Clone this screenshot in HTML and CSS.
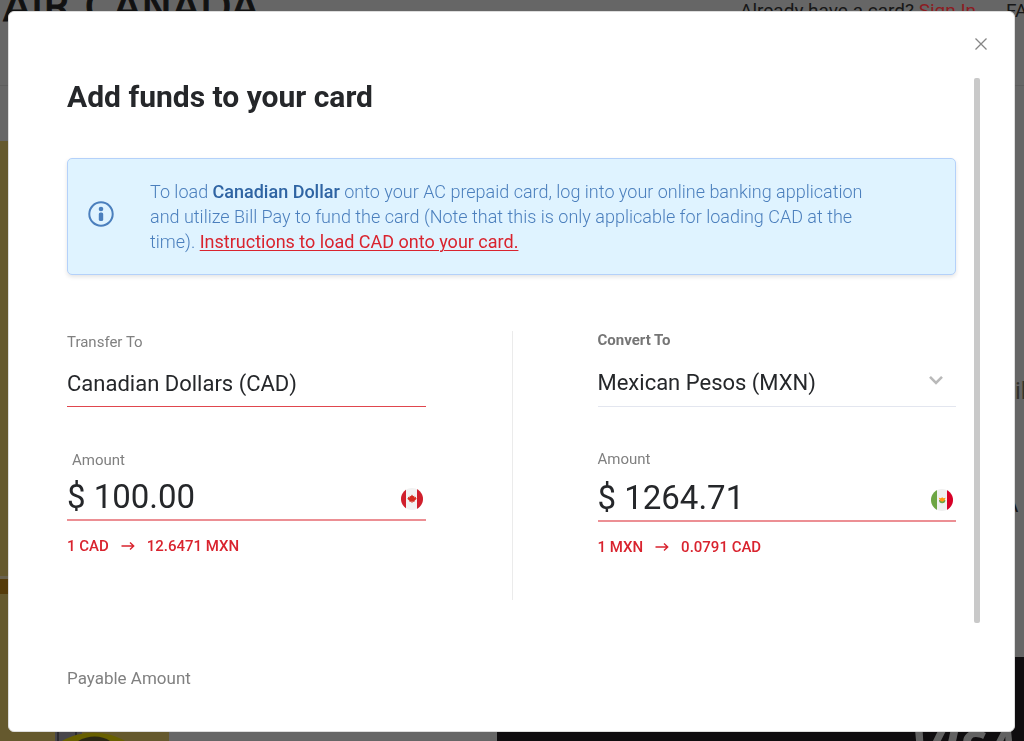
FILE: index.html
```html
<!DOCTYPE html>
<html lang="en">
<head>
<meta charset="utf-8">
<meta name="viewport" content="width=device-width, initial-scale=1">
<title>Add funds to your card</title>
<link rel="stylesheet" href="styles.css">
</head>
<body>
<div class="page">
  <header class="site-header">
    <div class="brand">AIR CANADA</div>
    <div class="site-links"><span>Already have a card? <a href="#signin">Sign In</a></span><a class="faq" href="#faq">FAQ</a></div>
  </header>
  <div class="site-nav"></div>
  <main class="hero">
    <div class="hero-photo">
      <div class="photo-band"></div>
      <svg class="photo-detail" viewBox="0 0 169 12" preserveAspectRatio="none">
        <rect x="55" y="0" width="27" height="12" fill="#48464a"/>
        <path d="M58 0V12M76 0V12" stroke="#2d2b30" stroke-width="2"/>
        <path d="M62 12C80 1 107 1 125 12Z" fill="#686000"/>
        <path d="M78 12C88 6 102 6 110 12Z" fill="#2b2814"/>
      </svg>
    </div>
    <div class="hero-copy">
      <p class="copy-line">il</p>
      <p class="copy-mark">A</p>
      <div class="bank-card">VISA</div>
    </div>
  </main>
</div>

<section class="modal" role="dialog" aria-modal="true" aria-labelledby="title">
  <button class="close" type="button" aria-label="Close">
    <svg width="14" height="14" viewBox="0 0 14 14"><path d="M1.500 1.500L12.500 12.500M12.500 1.500L1.500 12.500" stroke="#858585" stroke-width="1.300" fill="none"/></svg>
  </button>
  <form class="content">
    <h1 id="title">Add funds to your card</h1>
    <div class="notice">
      <svg class="info" width="26" height="26" viewBox="0 0 26 26"><circle cx="13" cy="13" r="11.700" fill="none" stroke="#4b7fbd" stroke-width="2"/><circle cx="13" cy="8" r="2.300" fill="#4b7fbd"/><rect x="10.800" y="11.500" width="4.400" height="8.500" rx="1.600" fill="#4b7fbd"/></svg>
      <p>To load <strong>Canadian Dollar</strong> onto your AC prepaid card, log into your online banking application and utilize Bill Pay to fund the card (Note that this is only applicable for loading CAD at the time). <a href="#instructions">Instructions to load CAD onto your card.</a></p>
    </div>
    <div class="transfer">
      <div class="side side-from">
        <label for="from">Transfer To</label>
        <div class="field"><input class="currency" id="from" type="text" value="Canadian Dollars (CAD)" readonly></div>
        <label class="amount-label" for="from-amount">Amount</label>
        <div class="amount">
          <input id="from-amount" type="text" value="$ 100.00">
          <svg width="24" height="24" viewBox="0 0 24 24" role="img" aria-label="Canada">
            <clipPath id="ca"><circle cx="12" cy="12" r="11"/></clipPath>
            <g clip-path="url(#ca)"><path fill="#f2f2f2" d="M0 0h24v24H0z"/><path fill="#d01f2c" d="M0 0h6v24H0zM17 0h7v24h-7z"/><path fill="#d52b1e" d="M12 7.500l1.100 1.800 1.300-.5-.2 1.800 1.800-.8-.2 1.400 1.100.4-2.600 2.300.3 1-2.200-.3v1.500h-.8v-1.500l-2.200.3.300-1-2.600-2.300 1.100-.4-.2-1.400 1.800.8-.2-1.800 1.300.5z"/></g>
          </svg>
        </div>
        <p class="rate"><span>1 CAD</span><svg width="14" height="10" viewBox="0 0 14 10"><path d="M.5 5H13M9 1.500L12.700 5 9 8.500"/></svg><span>12.6471 MXN</span></p>
      </div>
      <div class="divider"></div>
      <div class="side side-to">
        <label class="strong" for="to">Convert To</label>
        <div class="picker">
          <select class="currency" id="to"><option>Mexican Pesos (MXN)</option></select>
          <svg width="16" height="10" viewBox="0 0 16 10"><path d="M2 1.800L8 7.800 14 1.800" fill="none" stroke="#b9b9b9" stroke-width="2.600"/></svg>
        </div>
        <label class="amount-label" for="to-amount">Amount</label>
        <div class="amount">
          <input id="to-amount" type="text" value="$ 1264.71">
          <svg width="24" height="24" viewBox="0 0 24 24" role="img" aria-label="Mexico">
            <clipPath id="mx"><circle cx="12" cy="12" r="11"/></clipPath>
            <g clip-path="url(#mx)"><path fill="#f0f0f0" d="M0 0h24v24H0z"/><path fill="#6da544" d="M0 0h7v24H0z"/><path fill="#d80027" d="M17 0h7v24h-7z"/><path fill="#6da544" d="M9 12a3.200 3.200 0 0 0 6.400 0z"/><path fill="#ff9811" d="M8.700 9.700l2.200.6 1.300-1.100 1.300 1.100 2.200-.6-1.500 3-2 1-2-1z"/></g>
          </svg>
        </div>
        <p class="rate"><span>1 MXN</span><svg width="14" height="10" viewBox="0 0 14 10"><path d="M.5 5H13M9 1.500L12.700 5 9 8.500"/></svg><span>0.0791 CAD</span></p>
      </div>
    </div>
    <p class="payable">Payable Amount</p>
  </form>
  <div class="scroll-thumb"></div>
</section>
</body>
</html>
```
FILE: styles.css
```css
* { box-sizing: border-box; }
body { margin: 0; font-family: Roboto, "Liberation Sans", sans-serif; color: #25272a; background: #666; }
p, h1 { margin: 0; }
input, select, button { font: inherit; color: inherit; border: 0; padding: 0; margin: 0; background: none; border-radius: 0; outline: 0; }

/* Dimmed page behind the dialog */
.page { height: 100vh; overflow: hidden; display: flex; flex-direction: column; }
.site-header { height: 86px; flex: none; display: flex; justify-content: space-between; padding-left: 3px; border-bottom: 1px solid #5d5d5d; white-space: nowrap; overflow: hidden; }
.brand { font: 41px/40px "DejaVu Sans", sans-serif; color: #111; margin-top: -13px; -webkit-text-stroke: 1px #111; }
.site-links { display: flex; gap: 30px; width: 284px; font-size: 19px; line-height: 21px; color: #171717; }
.site-links a { color: #8c1c22; text-decoration: none; }
.site-links .faq { color: #171717; }
.site-nav { height: 55px; flex: none; }
.hero { flex: 1; display: flex; min-height: 0; }
.hero-photo { width: 169px; background: #65592e; display: flex; flex-direction: column; justify-content: space-between; padding-top: 435px; }
.photo-band { height: 18px; background: #553b0a; border-top: 3px solid #69624f; }
.photo-detail { width: 100%; height: 12px; display: block; }
.hero-copy { flex: 1; display: flex; flex-direction: column; align-items: flex-end; padding-top: 236px; overflow: hidden; }
.copy-line { font-size: 24px; line-height: 28px; width: 9px; color: #34332c; }
.copy-mark { font-size: 22px; line-height: 24px; margin-top: 88px; width: 20px; color: #171717; }
.bank-card { margin-top: 140px; align-self: stretch; flex: 1; margin-left: 328px; background: #0f0d0f; color: #626262; font: italic bold 52px/52px "Open Sans", sans-serif; text-align: right; padding: 65px 6px 0 0; overflow: hidden; }

/* Dialog */
.modal { position: fixed; top: 11px; right: 9px; bottom: 9px; left: 8px; overflow: hidden; background: #fff; border: 1px solid #ddd; border-radius: 6px; display: grid; grid-template-columns: 1fr 6px; column-gap: 18px; padding: 66px 34px 0 58px; }
.close { position: absolute; top: 21px; right: 22px; width: 22px; height: 22px; display: grid; place-items: center; cursor: pointer; }
.scroll-thumb { height: 545px; background: #c9c9c9; border-radius: 2px; }
h1 { font-size: 30px; line-height: 38px; font-weight: 700; }
.notice { margin-top: 42px; display: flex; align-items: center; gap: 36px; padding: 20px 84px 20px 20px; background: #dff3ff; border: 1px solid #b4d1fa; border-radius: 5px; box-shadow: 0 2px 4px #0000001c; color: #4b7fbd; font-size: 18px; line-height: 25px; font-weight: 300; }
.info { flex: none; margin-bottom: 6px; }
.notice strong { font-weight: 500; color: #2f64a3; }
.notice a { color: #d9232e; font-weight: 400; text-underline-offset: 2px; text-decoration-thickness: 1px; }
.transfer { margin-top: 56px; display: grid; grid-template-columns: 1fr auto 1fr; height: 269px; }
.divider { width: 1px; margin: 0 85px 0 86px; background: #ebebeb; }
.side { display: flex; flex-direction: column; min-width: 0; }
label { font-size: 15px; line-height: 18px; color: #808080; }
.side-from { padding-top: 2px; }
.strong { font-weight: 700; color: #757575; }
.currency { display: block; width: 100%; height: 44px; font-size: 22px; appearance: none; }
.field { margin-top: 11px; height: 45px; border-bottom: 1px solid #e0464e; }
.field .currency { height: 42px; }
.picker { display: flex; align-items: center; margin-top: 14px; border-bottom: 1px solid #e3e6ef; padding: 0 12px 5px 0; height: 44px; }
.picker .currency { height: 38px; }
.picker svg { flex: none; margin-bottom: 5px; }
.amount-label { margin-top: 43px; }
.side-from .amount-label { margin-left: 5px; margin-top: 44px; }
.amount { display: flex; align-items: center; border-bottom: 2px solid #ec8f94; padding: 6px 2px 0 0; height: 54px; }
.side-from .amount { height: 52px; padding-top: 5px; }
.amount input { flex: 1; min-width: 0; font-size: 33px; height: 44px; }
.amount svg { flex: none; margin-top: 5px; }
.rate { display: flex; align-items: center; gap: 12px; margin-top: 15px; font-size: 15px; line-height: 20px; font-weight: 500; color: #d9232e; }
.rate path { fill: none; stroke: #d9232e; stroke-width: 1.4; }
.payable { margin-top: 68px; font-size: 17px; line-height: 20px; color: #808080; }
```
